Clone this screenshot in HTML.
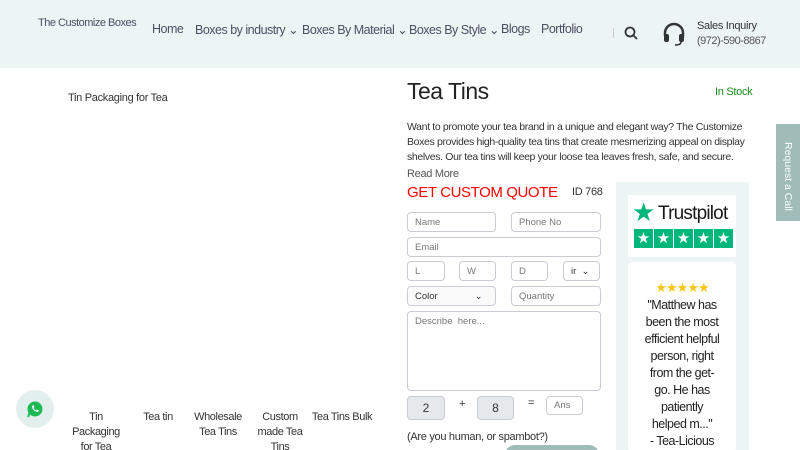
<!DOCTYPE html>
<html><head><style>
html,body{margin:0;width:800px;height:450px;overflow:hidden}
body{background:#fff;font-family:"Liberation Sans",sans-serif;color:#333;position:relative}
.hdr{position:absolute;left:0;top:0;width:800px;height:68px;background:#edf5f4}
.a{position:absolute;white-space:nowrap}
.nav{font-size:12.5px;color:#4a4f63;top:22px;letter-spacing:-0.5px}
.in{position:absolute;border:1px solid #c9cdd3;border-radius:4px;background:#fff;font-size:9.5px;color:#777;padding-left:7px;box-sizing:border-box;display:flex;align-items:center}
.th{position:absolute;top:410px;font-size:11px;color:#333;text-align:center;width:56px;line-height:15px;letter-spacing:-0.4px}
</style></head><body>
<div class="hdr"></div>
<div class="a" style="left:38px;top:17px;font-size:11px;color:#4a4f63;letter-spacing:-0.5px">The Customize Boxes</div>
<div class="a nav" style="left:152px">Home</div>
<div class="a nav" style="left:195px">Boxes by industry ⌄</div>
<div class="a nav" style="left:302px">Boxes By Material ⌄</div>
<div class="a nav" style="left:409px">Boxes By Style ⌄</div>
<div class="a nav" style="left:501px">Blogs</div>
<div class="a nav" style="left:541px">Portfolio</div>
<div class="a" style="left:613px;top:28px;width:1px;height:10px;background:#ccc"></div>
<svg class="a" style="left:624px;top:26px" width="14" height="14" viewBox="0 0 14 14"><circle cx="6" cy="6" r="4.5" fill="none" stroke="#333" stroke-width="1.8"/><path d="M9.5 9.5L13 13" stroke="#333" stroke-width="1.8"/></svg>
<svg class="a" style="left:661px;top:21px" width="26" height="26" viewBox="0 0 26 26"><path d="M4 15V12a9 9 0 0 1 18 0v3" fill="none" stroke="#333" stroke-width="2.5"/><rect x="3" y="13" width="5" height="8" rx="2" fill="#333"/><rect x="18" y="13" width="5" height="8" rx="2" fill="#333"/><path d="M20 21q0 3-6 3" fill="none" stroke="#333" stroke-width="1.5"/></svg>
<div class="a" style="left:697px;top:20px;font-size:11px;color:#333;letter-spacing:-0.3px">Sales Inquiry</div>
<div class="a" style="left:697px;top:35px;font-size:11px;color:#555;letter-spacing:-0.5px">(972)-590-8867</div>

<div class="a" style="left:68px;top:92px;font-size:11px;letter-spacing:-0.3px">Tin Packaging for Tea</div>
<div class="a" style="left:407px;top:78px;font-size:23px;color:#222;letter-spacing:-0.5px">Tea Tins</div>
<div class="a" style="left:715px;top:86px;font-size:11px;color:#1a8a1a;letter-spacing:-0.3px">In Stock</div>
<div class="a" style="left:407px;top:120px;width:342px;height:45px;overflow:hidden;font-size:10.5px;line-height:15px;white-space:normal;color:#333;letter-spacing:-0.35px">Want to promote your tea brand in a unique and elegant way? The Customize Boxes provides high-quality tea tins that create mesmerizing appeal on display shelves. Our tea tins will keep your loose tea leaves fresh, safe, and secure. We</div>
<div class="a" style="left:407px;top:168px;font-size:11px;color:#555;letter-spacing:-0.3px">Read More</div>
<div class="a" style="left:407px;top:184px;font-size:15px;color:#f00;letter-spacing:-0.4px">GET CUSTOM QUOTE</div>
<div class="a" style="left:572px;top:186px;font-size:11px;letter-spacing:-0.3px">ID 768</div>

<div class="in" style="left:407px;top:212px;width:89px;height:20px">Name</div>
<div class="in" style="left:511px;top:212px;width:90px;height:20px">Phone No</div>
<div class="in" style="left:407px;top:237px;width:194px;height:20px">Email</div>
<div class="in" style="left:407px;top:261px;width:38px;height:20px">L</div>
<div class="in" style="left:459px;top:261px;width:37px;height:20px">W</div>
<div class="in" style="left:511px;top:261px;width:37px;height:20px">D</div>
<div class="in" style="left:563px;top:261px;width:37px;height:20px;color:#333">ir &nbsp;⌄</div>
<div class="in" style="left:407px;top:286px;width:89px;height:20px;color:#333;background:#fafafa">Color &nbsp;&nbsp;&nbsp;&nbsp;&nbsp;&nbsp;&nbsp;&nbsp;&nbsp;&nbsp;&nbsp;&nbsp;&nbsp;⌄</div>
<div class="in" style="left:511px;top:286px;width:90px;height:20px">Quantity</div>
<div class="in" style="left:407px;top:311px;width:194px;height:80px;align-items:flex-start;padding-top:4px">Describe &nbsp;here...</div>
<div class="in" style="left:407px;top:396px;width:38px;height:24px;background:#e6e9ec;justify-content:center;padding:0;color:#333;font-size:12px">2</div>
<div class="a" style="left:459px;top:398px;font-size:11px">+</div>
<div class="in" style="left:477px;top:396px;width:37px;height:24px;background:#e6e9ec;justify-content:center;padding:0;color:#333;font-size:12px">8</div>
<div class="a" style="left:528px;top:397px;font-size:11px">=</div>
<div class="in" style="left:546px;top:396px;width:37px;height:19px">Ans</div>
<div class="a" style="left:407px;top:431px;font-size:11px;letter-spacing:-0.3px">(Are you human, or spambot?)</div>
<div class="a" style="left:505px;top:445px;width:94px;height:20px;border-radius:10px;background:#9fbcb8"></div>

<div class="a" style="left:616px;top:182px;width:133px;height:270px;background:#edf5f4"></div>
<div class="a" style="left:628px;top:195px;width:108px;height:62px;background:#fff"></div>
<div class="a" style="left:632px;top:197px;font-size:26px;color:#00b67a">★</div>
<div class="a" style="left:658px;top:203px;font-size:19px;color:#191919;letter-spacing:-0.8px">Trustpilot</div>
<div class="a" style="left:634px;top:229px;width:99px;height:19px;display:flex;gap:1px">
<div style="flex:1;background:#00b67a;color:#fff;text-align:center;font-size:15px;line-height:19px">★</div><div style="flex:1;background:#00b67a;color:#fff;text-align:center;font-size:15px;line-height:19px">★</div><div style="flex:1;background:#00b67a;color:#fff;text-align:center;font-size:15px;line-height:19px">★</div><div style="flex:1;background:#00b67a;color:#fff;text-align:center;font-size:15px;line-height:19px">★</div><div style="flex:1;background:#00b67a;color:#fff;text-align:center;font-size:15px;line-height:19px">★</div></div>
<div class="a" style="left:628px;top:262px;width:108px;height:190px;background:#fff;border-radius:4px"></div>
<div class="a" style="left:628px;top:280px;width:108px;text-align:center;font-size:13px;color:#f5c518;letter-spacing:-1px">★★★★★</div>
<div class="a" style="left:643px;top:297px;width:78px;text-align:center;white-space:normal;font-size:12.5px;line-height:17px;color:#222;letter-spacing:-0.5px">"Matthew has been the most efficient helpful person, right from the get-go. He has patiently helped m..."<br>- Tea-Licious</div>

<div class="a" style="left:776px;top:124px;width:24px;height:97px;background:#9fbcb8"></div>
<div class="a" style="left:782px;top:142px;font-size:10.5px;color:#fff;writing-mode:vertical-rl">Request a Call</div>

<div class="a" style="left:16px;top:390px;width:38px;height:38px;border-radius:50%;background:#e3efec"></div>
<svg class="a" style="left:26px;top:400px" width="18" height="18" viewBox="0 0 18 18"><circle cx="9" cy="9" r="7.5" fill="#1db954"/><path d="M2 17l1.5-4" stroke="#1db954" stroke-width="2"/><path d="M6 6q0 5 6 6l1-1.5-2-1-1 1q-2-1-2.5-2.5l1-1-1-2z" fill="#fff"/></svg>

<div class="th" style="left:68px">Tin Packaging for Tea</div>
<div class="th" style="left:130px">Tea tin</div>
<div class="th" style="left:190px">Wholesale Tea Tins</div>
<div class="th" style="left:252px">Custom made Tea Tins</div>
<div class="th" style="left:311px;width:62px">Tea Tins Bulk</div>
</body></html>
